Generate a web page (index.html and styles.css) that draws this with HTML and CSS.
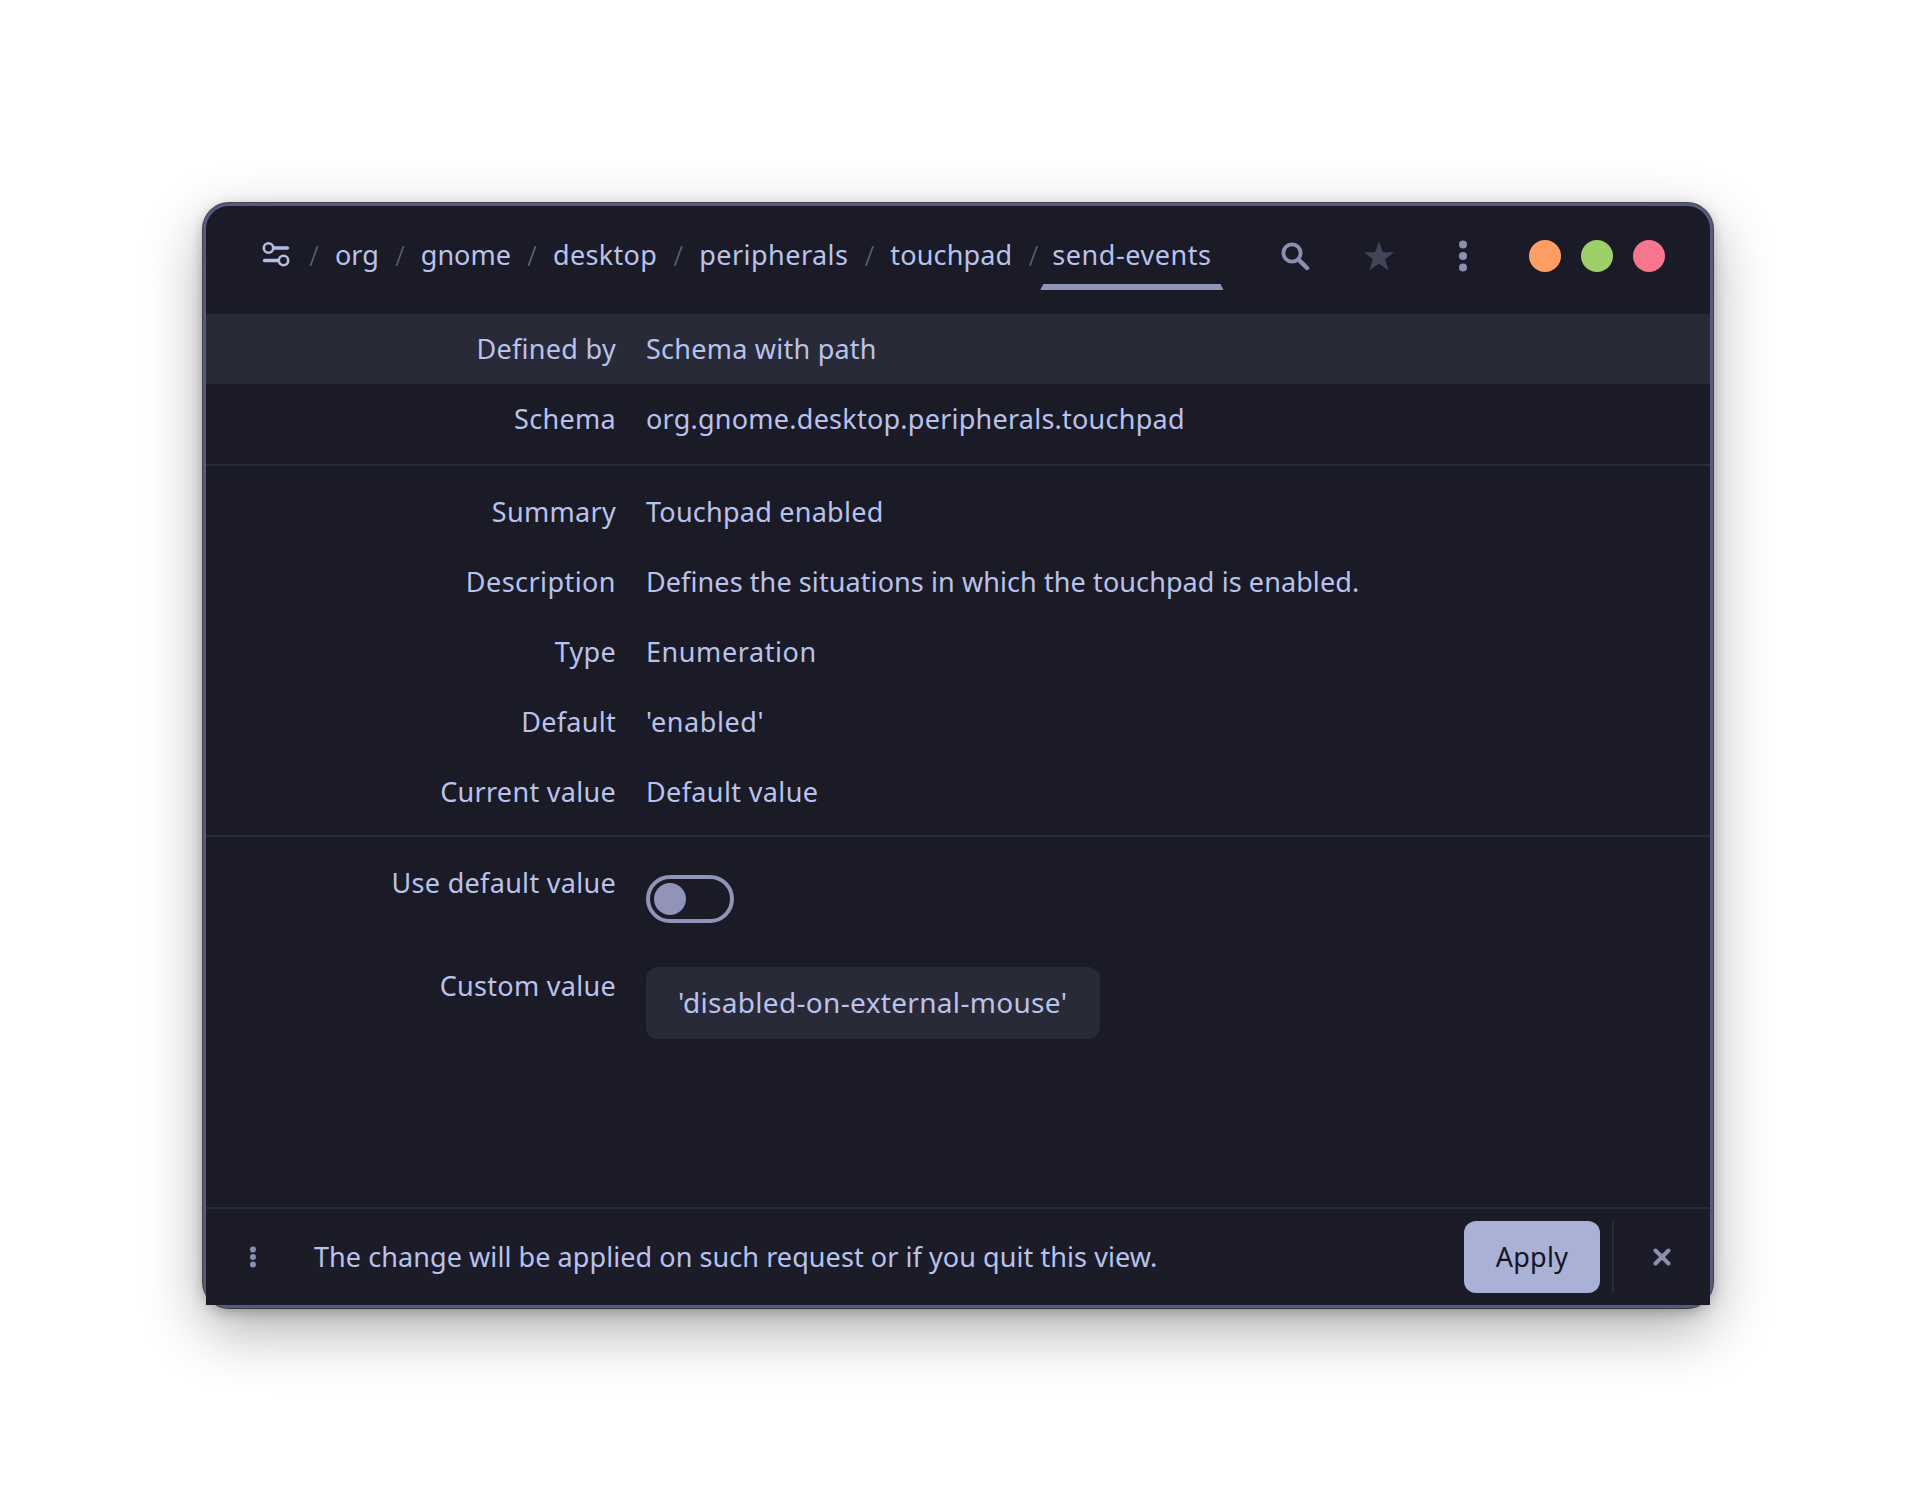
FILE: index.html
```html
<!DOCTYPE html>
<html lang="en">
<head>
<meta charset="utf-8">
<title>send-events</title>
<link rel="stylesheet" href="styles.css">
</head>
<body>
<main class="window">
  <header class="header">
    <nav class="crumbs">
      <svg class="icon-sliders" width="28" height="28" viewBox="0 0 28 28" fill="none" stroke="#b4bce6" stroke-width="2.6" stroke-linecap="round"><circle cx="6.5" cy="7" r="4.7"/><path d="M12 7H25.5" stroke-width="3.4"/><circle cx="21.5" cy="19.5" r="4.7"/><path d="M2.5 19.5H16" stroke-width="3.4"/></svg>
      <span class="sep">/</span><span class="crumb crumb-flat">org</span>
      <span class="sep">/</span><span class="crumb crumb-flat">gnome</span>
      <span class="sep">/</span><span class="crumb">desktop</span>
      <span class="sep">/</span><span class="crumb crumb-wide">peripherals</span>
      <span class="sep">/</span><span class="crumb crumb-narrow">touchpad</span>
      <span class="sep">/</span><span class="crumb crumb-active">send-events</span>
    </nav>
    <div class="tools">
      <svg class="tool" width="30" height="30" viewBox="0 0 30 30" fill="none" stroke="#8b90b3" stroke-width="3.8" stroke-linecap="round"><circle cx="12" cy="12" r="8.6"/><path d="M18.5 18.5L27 27" stroke-width="4.4"/></svg>
      <svg class="tool tool-star" width="32" height="32" viewBox="0 0 32 32" fill="#414558"><path d="M16 1.500L20 12.200H31L22.200 19.200L25.500 30.500L16 23.800L6.500 30.500L9.800 19.200L1 12.200H12Z"/></svg>
      <svg class="tool tool-dots" width="10" height="32" viewBox="0 0 10 32" fill="#8b90b3"><circle cx="5" cy="4.500" r="4"/><circle cx="5" cy="16" r="4"/><circle cx="5" cy="27.500" r="4"/></svg>
    </div>
    <div class="lights">
      <span class="light light-orange"></span>
      <span class="light light-green"></span>
      <span class="light light-red"></span>
    </div>
  </header>

  <section class="rows">
    <div class="row row-hl"><span class="label">Defined by</span><span class="value">Schema with path</span></div>
    <div class="row"><span class="label">Schema</span><span class="value">org.gnome.desktop.peripherals.touchpad</span></div>
  </section>
  <hr class="rule rule-a">
  <section class="rows">
    <div class="row"><span class="label">Summary</span><span class="value">Touchpad enabled</span></div>
    <div class="row"><span class="label label-wide">Description</span><span class="value value-tight">Defines the situations in which the touchpad is enabled.</span></div>
    <div class="row"><span class="label">Type</span><span class="value value-wide">Enumeration</span></div>
    <div class="row"><span class="label">Default</span><span class="value value-wide">'enabled'</span></div>
    <div class="row"><span class="label">Current value</span><span class="value value-mid">Default value</span></div>
  </section>
  <hr class="rule rule-b">
  <section class="rows rows-edit">
    <div class="row row-toggle"><span class="label">Use default value</span><div class="toggle"><span class="knob"></span></div></div>
    <div class="row row-entry"><span class="label">Custom value</span><div class="entry">'disabled-on-external-mouse'</div></div>
  </section>

  <footer class="bar">
    <svg class="bar-dots" width="8" height="22" viewBox="0 0 8 22" fill="#8b90b3"><circle cx="4" cy="3.500" r="3"/><circle cx="4" cy="11" r="3"/><circle cx="4" cy="18.500" r="3"/></svg>
    <span class="bar-text">The change will be applied on such request or if you quit this view.</span>
    <button class="apply">Apply</button>
    <span class="bar-sep"></span>
    <svg class="bar-close" width="18" height="18" viewBox="0 0 18 18" fill="none" stroke="#8b90b3" stroke-width="4" stroke-linecap="round"><path d="M2.500 2.500L15.500 15.500M15.500 2.500L2.500 15.500"/></svg>
  </footer>
</main>
</body>
</html>
```
FILE: styles.css
```css
* { box-sizing: border-box; }
html, body { margin: 0; background: #fff; }
body {
  width: 1916px;
  height: 1512px;
  padding: 203px 0 0 203px;
  font-family: "Noto Sans", sans-serif;
  font-size: 27px;
  color: #b9c2ec;
  overflow: hidden;
}
.window {
  width: 1510px;
  height: 1105px;
  display: flex;
  flex-direction: column;
  background: #1a1b26;
  border: 3px solid #565a7c;
  border-radius: 26px;
  box-shadow: 0 0 0 1px rgba(30,30,40,.8), 0 22px 60px rgba(0,0,0,.32), 0 4px 14px rgba(0,0,0,.25);
}
.header {
  height: 108px;
  display: flex;
  align-items: flex-start;
  padding: 24px 0 0 56px;
  flex: none;
}
.crumbs { display: flex; align-items: center; height: 50px; }
.icon-sliders { margin-right: 3px; }
.sep { color: #60647f; width: 42px; text-align: center; font-weight: 300; flex: none; }
.crumb { white-space: nowrap; line-height: 50px; letter-spacing: .35px; }
.crumb-flat { letter-spacing: 0; }
.crumb-narrow { letter-spacing: .15px; }
.crumb-wide { letter-spacing: .45px; }
.crumb-active { position: relative; letter-spacing: .55px; margin-left: -2px; }
.crumb-active::after {
  content: "";
  position: absolute;
  left: -12px; right: -12px; bottom: -10px;
  height: 6px;
  background: #8f94b8;
  clip-path: polygon(3px 0, calc(100% - 3px) 0, 100% 100%, 0 100%);
}
.tools { display: flex; align-items: center; height: 50px; margin: 1px 0 0 68px; }
.tool { display: block; }
.tool-star { margin-left: 53px; }
.tool-dots { margin-left: 63px; }
.lights { display: flex; gap: 20px; height: 50px; align-items: center; margin: 1px 0 0 61px; }
.light { width: 32px; height: 32px; border-radius: 50%; display: block; }
.light-orange { background: #ff9e64; }
.light-green { background: #9ece6a; }
.light-red { background: #f7768e; }
.rows { flex: none; }
.row {
  display: grid;
  grid-template-columns: 410px 1fr;
  column-gap: 30px;
  height: 70px;
  line-height: 70px;
}
.row-hl { background: #282a37; }
.label { text-align: right; white-space: nowrap; letter-spacing: .3px; }
.label-wide { letter-spacing: .44px; }
.value { white-space: nowrap; letter-spacing: .24px; }
.value-tight { letter-spacing: .09px; }
.value-mid { letter-spacing: .37px; }
.value-wide { letter-spacing: .58px; }
.rule { margin: 0; border: 0; height: 2px; background: #2a2b3a; flex: none; }
.rule-a { margin: 10px 0 11px; }
.rule-b { margin: 8px 0 11px; }
.row-toggle { height: 103px; }
.row-entry { height: 88px; }
.toggle {
  width: 88px;
  height: 48px;
  margin-top: 27px;
  padding: 4px;
  border: 4px solid #8f94b8;
  border-radius: 24px;
}
.knob { display: block; width: 32px; height: 32px; border-radius: 50%; background: #8f94b8; }
.entry {
  width: 454px;
  height: 72px;
  margin-top: 16px;
  line-height: 70px;
  padding-left: 32px;
  background: #282a37;
  border-radius: 12px;
  white-space: nowrap;
  font-size: 28px;
  letter-spacing: .32px;
}
.bar {
  margin-top: auto;
  height: 98px;
  flex: none;
  display: flex;
  align-items: center;
  border-top: 2px solid #2a2b3a;
  padding-left: 43px;
  background: #1c1c28;
}
.bar-dots { flex: none; }
.bar-text { margin: 0 0 2px 57px; white-space: nowrap; flex: 1; letter-spacing: .07px; }
.apply {
  width: 136px;
  height: 72px;
  border: 0;
  border-radius: 12px;
  background: #a9b1d6;
  color: #15161e;
  font: inherit;
  letter-spacing: .3px;
  padding: 0 0 2px;
  flex: none;
}
.bar-sep { width: 2px; height: 72px; background: #2a2b3a; margin-left: 12px; flex: none; }
.bar-close { margin: 0 39px 0 39px; flex: none; }
```
